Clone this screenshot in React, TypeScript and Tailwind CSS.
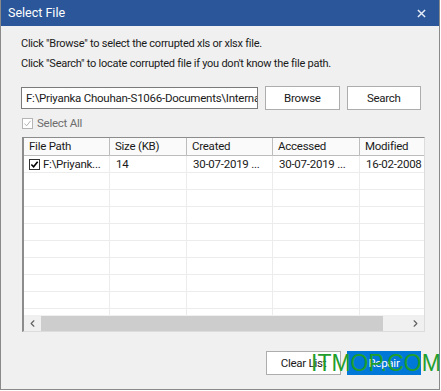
import { ChevronLeft, ChevronRight } from 'lucide-react'

const cols = [
  { label: 'File Path', w: 'w-[86px]' },
  { label: 'Size (KB)', w: 'w-[77px]' },
  { label: 'Created', w: 'w-[86px]' },
  { label: 'Accessed', w: 'w-[87px]' },
  { label: 'Modified', w: 'w-[90px]' },
]

function Check({ disabled }: { disabled?: boolean }) {
  return (
    <span
      className={`inline-flex w-[11px] h-[11px] shrink-0 items-center justify-center border bg-white ${
        disabled ? 'border-[#b5b5b5]' : 'border-[#333]'
      }`}
    >
      <svg viewBox="0 0 10 10" className="w-[9px] h-[9px]">
        <path
          d="M1.5 5 L4 7.5 L8.5 2"
          fill="none"
          stroke={disabled ? '#a8a8a8' : '#000'}
          strokeWidth={disabled ? 1 : 1.8}
        />
      </svg>
    </span>
  )
}

export default function App() {
  const emptyRows = Array.from({ length: 9 })

  return (
    <div
      className="relative w-[441px] h-[391px] bg-white text-[11.5px] leading-[16px] tracking-[-0.25px] text-[#1a1a1a]"
      style={{ fontFamily: 'Roboto, "Liberation Sans", sans-serif' }}
    >
      <div className="w-[440px] h-[390px] border border-t-0 border-[#8a8a8a] bg-[#f0f0f0] flex flex-col">
        {/* Title bar */}
        <div className="h-[26px] shrink-0 bg-[#2b579a] flex items-center justify-between pl-[7px] pr-[13px] text-white">
          <span className="text-[12.5px] tracking-normal">Select File</span>
          <svg viewBox="0 0 10 10" className="w-[9px] h-[9px]">
            <path d="M1 1 L9 9 M9 1 L1 9" stroke="#e8eef7" strokeWidth={1.6} />
          </svg>
        </div>

        <div className="flex flex-col pl-[20px] pr-[18px]">
          <p className="mt-[10px] text-[11px]">Click "Browse" to select the corrupted xls or xlsx file.</p>
          <p className="mt-[4px] text-[11px]">Click "Search" to locate corrupted file if you don't know the file path.</p>

          {/* Path + buttons */}
          <div className="mt-[14px] flex items-center gap-[7px]">
            <div className="w-[239px] h-[22px] border border-[#7a7a7a] bg-white flex items-center pl-[4px] overflow-hidden whitespace-nowrap">
              F:\Priyanka Chouhan-S1066-Documents\Internal
            </div>
            <button className="w-[75px] h-[24px] border border-[#adadad] bg-white">Browse</button>
            <button className="w-[75px] h-[24px] border border-[#adadad] bg-white">Search</button>
          </div>

          {/* Select all */}
          <div className="mt-[5px] pl-[1px] flex items-center gap-[4px] text-[#6d6d6d]">
            <Check disabled />
            <span>Select All</span>
          </div>

          {/* Table */}
          <div className="mt-[6px] ml-[1px] w-[403px] h-[195px] border-l-2 border-t border-[#8c8c8c] border-r border-b border-r-[#dcdcdc] border-b-[#dcdcdc] bg-white flex flex-col overflow-hidden">
            <div className="flex h-[18px] bg-[#fafafa] border-b border-[#bdbdbd] shrink-0">
              {cols.map(c => (
                <div key={c.label} className={`${c.w} shrink-0 border-r border-[#bdbdbd] pl-[5px] leading-[17px] whitespace-nowrap`}>
                  {c.label}
                </div>
              ))}
            </div>
            <div className="flex-1 overflow-hidden">
              <div className="flex h-[17px] border-b border-[#ececec]">
                <div className="w-[86px] shrink-0 border-r border-[#ececec] pl-[5px] flex items-center gap-[3px] whitespace-nowrap">
                  <Check />
                  <span>F:\Priyank...</span>
                </div>
                <div className="w-[77px] shrink-0 border-r border-[#ececec] pl-[6px]">14</div>
                <div className="w-[86px] shrink-0 border-r border-[#ececec] pl-[6px] whitespace-nowrap">30-07-2019 ...</div>
                <div className="w-[87px] shrink-0 border-r border-[#ececec] pl-[6px] whitespace-nowrap">30-07-2019 ...</div>
                <div className="w-[90px] shrink-0 pl-[6px] whitespace-nowrap overflow-hidden">16-02-2008 1</div>
              </div>
              {emptyRows.map((_, i) => (
                <div key={i} className="flex h-[17px] border-b border-[#ececec]">
                  {cols.map(c => (
                    <div key={c.label} className={`${c.w} shrink-0 border-r border-[#ececec]`} />
                  ))}
                </div>
              ))}
            </div>
            {/* Horizontal scrollbar */}
            <div className="h-[16px] shrink-0 bg-[#f0f0f0] flex items-center">
              <div className="w-[17px] flex justify-center text-[#606060]">
                <ChevronLeft size={11} strokeWidth={2.5} />
              </div>
              <div className="w-[342px] h-[15px] bg-[#cdcdcd]" />
              <div className="flex-1 flex justify-end pr-[3px] text-[#606060]">
                <ChevronRight size={11} strokeWidth={2.5} />
              </div>
            </div>
          </div>

          {/* Bottom buttons */}
          <div className="mt-[19px] flex justify-end gap-[6px]">
            <button className="w-[75px] h-[24px] border border-[#adadad] bg-white">Clear List</button>
            <button className="w-[74px] h-[24px] bg-[#0078d7] text-white">Repair</button>
          </div>
        </div>
      </div>

      {/* watermark */}
      <div
        className="absolute left-[311px] top-[352px] text-[23px] leading-[23px] tracking-normal text-[#1f9e2c]"
        style={{ fontFamily: '"Liberation Sans", Arial, sans-serif' }}
      >
        ITMOP.COM
      </div>
    </div>
  )
}
